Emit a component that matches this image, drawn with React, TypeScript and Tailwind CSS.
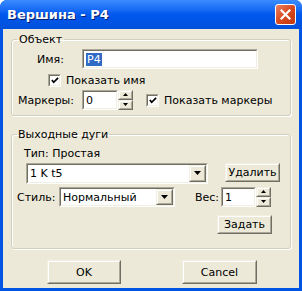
import React from 'react';

const font = { fontFamily: '"DejaVu Sans", Verdana, sans-serif' };

const Sunken: React.FC<{ className?: string; children?: React.ReactNode }> = ({ className = '', children }) => (
  <div className={`shrink-0 border border-t-[#ACA899] border-l-[#ACA899] border-r-white border-b-white ${className}`}>
    <div className="h-full w-full border border-t-[#716F64] border-l-[#716F64] border-r-[#F1EFE2] border-b-[#F1EFE2] bg-white flex items-center">
      {children}
    </div>
  </div>
);

const Raised: React.FC<{ className?: string; children?: React.ReactNode }> = ({ className = '', children }) => (
  <div className={`shrink-0 border border-t-[#F1EFE2] border-l-[#F1EFE2] border-r-[#716F64] border-b-[#716F64] bg-[#ECE9D8] ${className}`}>
    <div className="h-full w-full border border-t-white border-l-white border-r-[#ACA899] border-b-[#ACA899] flex items-center justify-center">
      {children}
    </div>
  </div>
);

const Arrow: React.FC<{ up?: boolean; size?: number }> = ({ up, size = 7 }) => (
  <svg width={size} height={Math.ceil(size / 2) + 1} viewBox={`0 0 ${size} ${Math.ceil(size / 2) + 1}`}>
    {up ? (
      <polygon points={`0,${Math.ceil(size / 2)} ${size},${Math.ceil(size / 2)} ${size / 2},0`} fill="#000" />
    ) : (
      <polygon points={`0,0 ${size},0 ${size / 2},${Math.ceil(size / 2)}`} fill="#000" />
    )}
  </svg>
);

const Spin: React.FC = () => (
  <div className="flex flex-col shrink-0 h-[20px] w-[15px]">
    <Raised className="h-[10px] w-[15px]">
      <Arrow up size={5} />
    </Raised>
    <Raised className="h-[10px] w-[15px]">
      <Arrow size={5} />
    </Raised>
  </div>
);

const Check: React.FC = () => (
  <Sunken className="w-[13px] h-[13px]">
    <svg width="9" height="9" viewBox="0 0 9 9" className="ml-[1px]">
      <polyline points="1,4 3,6.5 8,1.5" fill="none" stroke="#000" strokeWidth="2" />
    </svg>
  </Sunken>
);

const Combo: React.FC<{ text: string; className?: string }> = ({ text, className = '' }) => (
  <Sunken className={className}>
    <span className="flex-1 pl-[2px] text-black">{text}</span>
    <Raised className="h-full w-[17px]">
      <Arrow size={7} />
    </Raised>
  </Sunken>
);

const App: React.FC = () => {
  return (
    <div style={font} className="w-[302px] h-[291px] flex flex-col rounded-t-[7px] bg-[#0054E3] text-[11px] leading-[13px] text-black overflow-hidden">
      {/* Title bar */}
      <div className="h-[29px] flex items-center justify-between pl-[7px] pr-[6px] bg-gradient-to-b from-[#3B8CFF] via-[#0058EE] to-[#0150DA]">
        <span className="text-white font-bold text-[13px] leading-[16px] [text-shadow:1px_1px_0_#0A1F6E]">Вершина - P4</span>
        <div className="w-[21px] h-[21px] rounded-[3px] border border-white bg-gradient-to-br from-[#E9805F] via-[#D9491D] to-[#C13810] flex items-center justify-center">
          <svg width="11" height="11" viewBox="0 0 11 11">
            <path d="M1.5 1.5 L9.5 9.5 M9.5 1.5 L1.5 9.5" stroke="#fff" strokeWidth="2.2" strokeLinecap="square" />
          </svg>
        </div>
      </div>

      {/* Body */}
      <div className="flex-1 mx-[3px] mb-[3px] bg-[#ECE9D8] flex flex-col px-[8px] pt-[4px]">
        {/* Объект */}
        <fieldset className="border border-[#D0D0BF] rounded-[3px] pb-[5px] shadow-[inset_1px_1px_0_white,1px_1px_0_white]">
          <legend className="ml-[5px] px-[2px] leading-[13px]">Объект</legend>
          <div className="flex items-center mt-[3px] h-[20px]">
            <span className="ml-[25px] w-[45px]">Имя:</span>
            <Sunken className="w-[176px] h-[20px]">
              <span className="ml-[2px] bg-[#316AC5] text-white px-[1px]">P4</span>
            </Sunken>
          </div>
          <div className="flex items-center mt-[5px] ml-[36px] h-[13px]">
            <Check />
            <span className="ml-[5px]">Показать имя</span>
          </div>
          <div className="flex items-center mt-[3px] h-[20px]">
            <span className="ml-[6px] w-[64px]">Маркеры:</span>
            <Sunken className="w-[36px] h-[20px]">
              <span className="pl-[2px]">0</span>
            </Sunken>
            <Spin />
            <div className="ml-[13px]">
              <Check />
            </div>
            <span className="ml-[5px]">Показать маркеры</span>
          </div>
        </fieldset>

        {/* Выходные дуги */}
        <fieldset className="mt-[12px] border border-[#D0D0BF] rounded-[3px] pb-[14px] shadow-[inset_1px_1px_0_white,1px_1px_0_white]">
          <legend className="ml-[5px] px-[1px] leading-[13px]">Выходные дуги</legend>
          <div className="ml-[12px] mt-[6px]">Тип: Простая</div>
          <div className="flex items-start mt-[3px] h-[21px]">
            <Combo text="1 K t5" className="ml-[14px] w-[182px] h-[21px]" />
            <Raised className="ml-[17px] w-[55px] h-[19px]">
              <span>Удалить</span>
            </Raised>
          </div>
          <div className="flex items-center mt-[3px] h-[20px]">
            <span className="ml-[5px] w-[42px]">Стиль:</span>
            <Combo text="Нормальный" className="w-[116px] h-[20px]" />
            <span className="ml-[20px] w-[26px]">Вес:</span>
            <Sunken className="w-[35px] h-[20px]">
              <span className="pl-[2px]">1</span>
            </Sunken>
            <Spin />
          </div>
          <div className="flex justify-end mt-[8px] mr-[18px]">
            <Raised className="w-[55px] h-[19px]">
              <span>Задать</span>
            </Raised>
          </div>
        </fieldset>

        {/* Buttons */}
        <div className="flex mt-[11px]">
          <Raised className="ml-[36px] w-[74px] h-[24px]">
            <span>OK</span>
          </Raised>
          <Raised className="ml-[61px] w-[75px] h-[24px]">
            <span>Cancel</span>
          </Raised>
        </div>
      </div>
    </div>
  );
};

export default App;
